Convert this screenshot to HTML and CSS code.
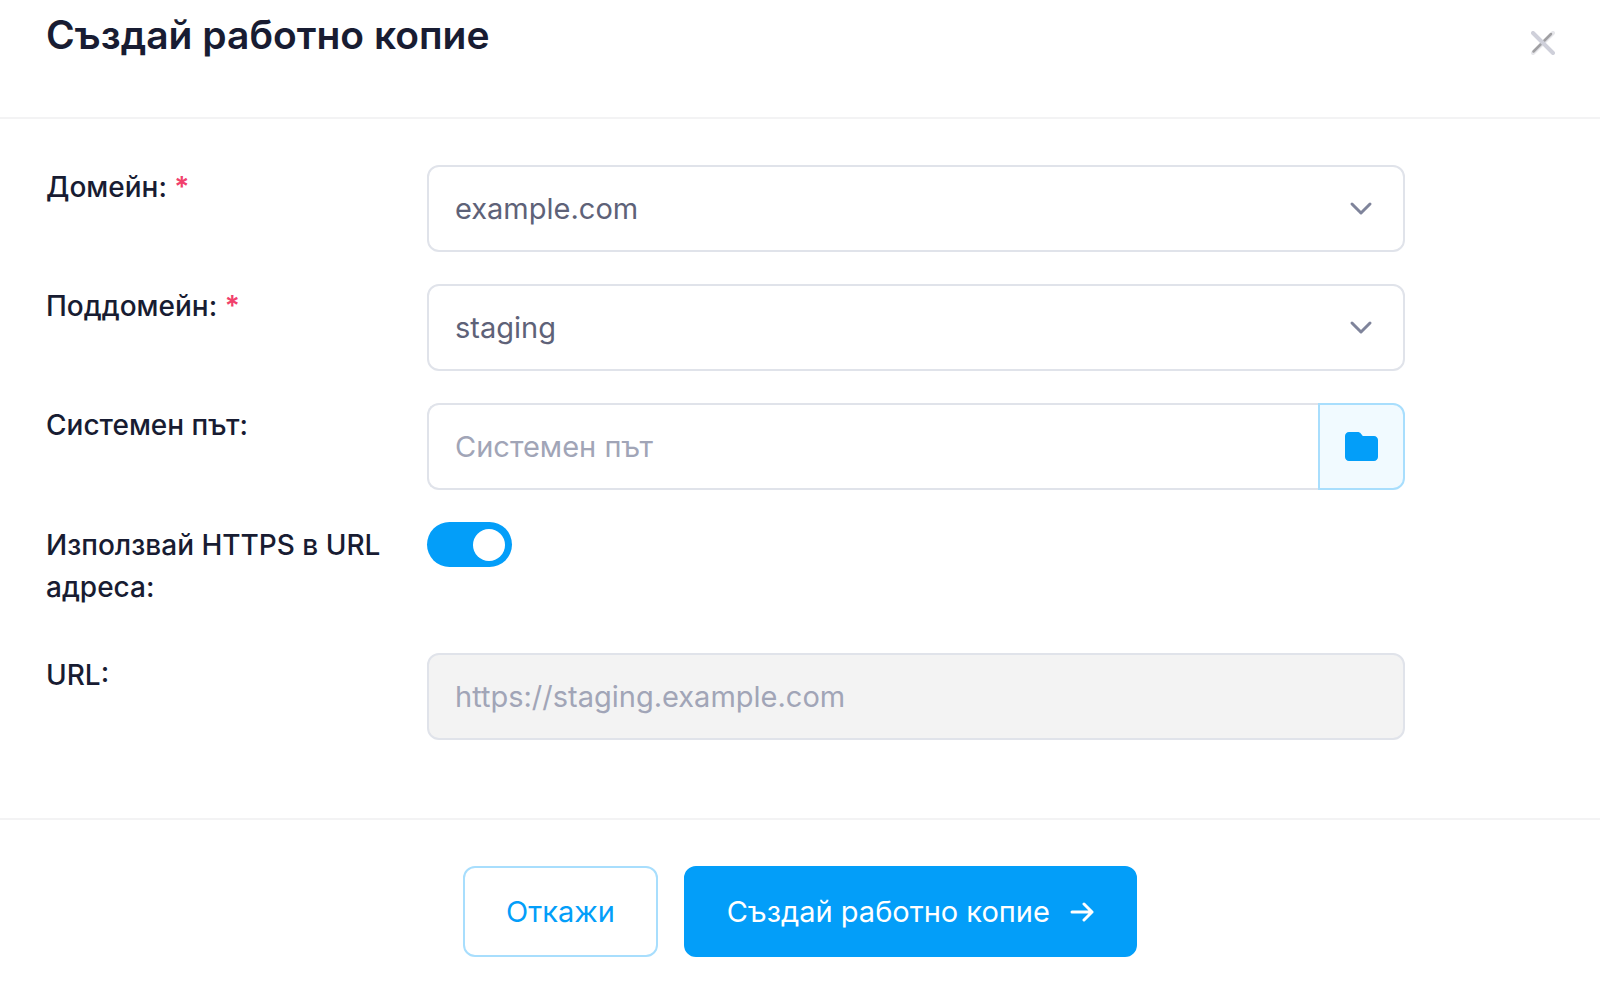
FILE: index.html
```
<!DOCTYPE html>
<html lang="bg">
<head>
  <meta charset="UTF-8" />
  <meta name="viewport" content="width=device-width, initial-scale=1.0" />
  <title>Създай работно копие</title>
  <link rel="stylesheet" href="styles.css">
</head>
<body>
  <form class="modal">
    <header class="modal-header">
      <h1>Създай работно копие</h1>
      <button type="button" class="close" aria-label="Затвори">
        <svg width="24" height="24" viewBox="0 0 24 24" fill="none" stroke-linecap="round">
          <path d="M2 22L22 2" stroke="#e6e6ea" stroke-width="4" />
          <path d="M2.500 20.500L20 3" stroke="#a0a0a3" stroke-width="2.500" />
          <path d="M2 2L22 22" stroke="#cfd0da" stroke-width="4" />
        </svg>
      </button>
    </header>

    <div class="modal-body">
      <div class="row">
        <label for="domain">Домейн: <span class="required">*</span></label>
        <div class="select">
          <select id="domain" name="domain" required>
            <option>example.com</option>
          </select>
          <svg width="24" height="16" viewBox="0 0 24 16" fill="none" stroke="#7f849b" stroke-width="3" stroke-linecap="round" stroke-linejoin="round">
            <path d="M3 3L12 12L21 3" />
          </svg>
        </div>
      </div>

      <div class="row">
        <label for="subdomain">Поддомейн: <span class="required">*</span></label>
        <div class="select">
          <select id="subdomain" name="subdomain" required>
            <option>staging</option>
          </select>
          <svg width="24" height="16" viewBox="0 0 24 16" fill="none" stroke="#7f849b" stroke-width="3" stroke-linecap="round" stroke-linejoin="round">
            <path d="M3 3L12 12L21 3" />
          </svg>
        </div>
      </div>

      <div class="row">
        <label for="path">Системен път:</label>
        <div class="input-group">
          <input type="text" class="input" id="path" name="path" placeholder="Системен път">
          <button type="button" class="browse" aria-label="Избери папка">
            <svg width="33" height="29" viewBox="0 0 33 29" fill="#039ef9">
              <path d="M4 0H12.500C14 0 15 .5 15.800 1.500L17.800 4H29C31.200 4 33 5.800 33 8V25C33 27.200 31.200 29 29 29H4C1.800 29 0 27.200 0 25V4C0 1.800 1.800 0 4 0Z" />
            </svg>
          </button>
        </div>
      </div>

      <div class="row row-toggle">
        <label for="https">Използвай HTTPS в URL адреса:</label>
        <input type="checkbox" class="toggle" id="https" name="https" checked>
      </div>

      <div class="row">
        <label for="url">URL:</label>
        <input type="text" class="input" id="url" name="url" value="https://staging.example.com" disabled>
      </div>
    </div>

    <footer class="modal-footer">
      <button type="button" class="btn btn-outline">Откажи</button>
      <button type="submit" class="btn btn-primary">
        Създай работно копие
        <svg width="24" height="22" viewBox="0 0 24 22" fill="none" stroke="#fff" stroke-width="3" stroke-linecap="round" stroke-linejoin="round">
          <path d="M2 11H22M14 3L22 11L14 19" />
        </svg>
      </button>
    </footer>
  </form>
</body>
</html>
```
FILE: styles.css
```
* {
  box-sizing: border-box;
}

body {
  margin: 0;
  background: #fff;
  color: #181c32;
  font-family: Inter, sans-serif;
  font-size: 28px;
  font-weight: 500;
  line-height: 42px;
}

button, input, select {
  margin: 0;
  font: inherit;
  font-size: 29px;
  font-weight: 400;
}

button {
  cursor: pointer;
}

svg {
  display: block;
}

/* Header */
.modal-header {
  display: flex;
  justify-content: space-between;
  align-items: flex-start;
  padding: 11px 45px 58px 46px;
  border-bottom: 2px solid #f3f3f4;
}

h1 {
  margin: 0;
  font-size: 39px;
  font-weight: 600;
  line-height: 48px;
}

.close {
  margin-top: 20px;
  padding: 0;
  border: 0;
  background: none;
}

/* Form rows */
.modal-body {
  display: flex;
  flex-direction: column;
  gap: 32px;
  padding: 46px 195px 78px 46px;
}

.row {
  display: grid;
  grid-template-columns: 341px 1fr;
  column-gap: 40px;
  align-items: start;
}

.row label {
  padding-top: 1px;
}

.row-toggle label {
  padding: 2px 0 13px;
}

.required {
  color: #f1416c;
  font-weight: 600;
}

.input, select {
  width: 100%;
  height: 87px;
  padding: 0 26px;
  border: 2px solid #e0e3ea;
  border-radius: 12px;
  background: #fff;
  color: #5e6278;
}

.input::placeholder {
  color: #a1a5b7;
  opacity: 1;
}

.input:disabled {
  background: #f3f3f3;
  color: #a1a5b7;
}

.select {
  display: grid;
  align-items: center;
}

.select select,
.select svg {
  grid-area: 1 / 1;
}

.select select {
  appearance: none;
}

.select svg {
  justify-self: end;
  margin-right: 32px;
  pointer-events: none;
}

.input-group {
  display: flex;
}

.input-group .input {
  flex: 1;
  min-width: 0;
  border-right: 0;
  border-radius: 12px 0 0 12px;
}

.browse {
  display: flex;
  align-items: center;
  justify-content: center;
  width: 87px;
  padding: 0;
  border: 2px solid #a8defd;
  border-radius: 0 12px 12px 0;
  background: #f1faff;
}

.toggle {
  display: flex;
  align-items: center;
  justify-content: flex-end;
  appearance: none;
  width: 85px;
  height: 45px;
  padding: 0 7px;
  border-radius: 23px;
  background: #b5b5c3;
  cursor: pointer;
}

.toggle::before {
  content: "";
  width: 32px;
  height: 32px;
  border-radius: 50%;
  background: #fff;
}

.toggle:checked {
  background: #039ef9;
}

.toggle:not(:checked) {
  justify-content: flex-start;
}

/* Footer */
.modal-footer {
  display: flex;
  justify-content: center;
  gap: 26px;
  padding: 46px 46px 24px;
  border-top: 2px solid #f3f3f4;
}

.btn {
  display: flex;
  align-items: center;
  gap: 20px;
  height: 91px;
  padding: 0 41px;
  border: 2px solid #039ef9;
  border-radius: 12px;
}

.btn-outline {
  border-color: #a8defd;
  background: #fff;
  color: #039ef9;
}

.btn-primary {
  background: #039ef9;
  color: #fff;
}
```
